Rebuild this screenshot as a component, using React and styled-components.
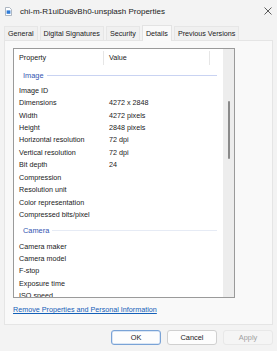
import React from 'react';
import styled, { createGlobalStyle } from 'styled-components';

const GlobalStyle = createGlobalStyle`
    html, body {
        margin: 0;
        padding: 0;
        background: #f3f3f3;
    }
    body {
        font-family: "Liberation Sans", Arial, sans-serif;
        color: #1a1a1a;
    }
`;

const Window = styled.div`
    width: 277px;
    height: 351px;
    display: flex;
    flex-direction: column;
    background: #f3f3f3;
    overflow: hidden;
`;

const TitleBar = styled.div`
    height: 22px;
    display: flex;
    align-items: center;
    padding: 0 5px;
    font-size: 8px;
`;

const TitleText = styled.span`
    margin-left: 8px;
    flex: 1;
    white-space: nowrap;
`;

const TabStrip = styled.div`
    height: 18px;
    display: flex;
    align-items: flex-end;
    gap: 2px;
    padding-left: 4px;
`;

const Tab = styled.div`
    height: ${p => (p.active ? 16 : 14)}px;
    box-sizing: border-box;
    display: flex;
    align-items: center;
    padding: 0 3px;
    font-size: 7.2px;
    white-space: nowrap;
    background: ${p => (p.active ? '#f9f9f9' : '#f0f0f0')};
    border: 1px solid ${p => (p.active ? '#e3e3e3' : '#e6e6e6')};
    border-bottom: none;
    margin-bottom: ${p => (p.active ? -1 : 0)}px;
    position: relative;
    z-index: ${p => (p.active ? 1 : 0)};
`;

const Panel = styled.div`
    margin: 0 4px;
    height: 285px;
    box-sizing: border-box;
    background: #f9f9f9;
    border: 1px solid #e5e5e5;
    padding: 7px 0 0 8px;
    display: flex;
    flex-direction: column;
`;

const ListBox = styled.div`
    width: 222px;
    height: 250px;
    flex-shrink: 0;
    box-sizing: border-box;
    border: 1px solid #9a9a9a;
    background: #fff;
    display: flex;
    overflow: hidden;
`;

const ListBody = styled.div`
    flex: 1;
    display: flex;
    flex-direction: column;
`;

const HeaderRow = styled.div`
    height: 17px;
    flex-shrink: 0;
    display: flex;
    align-items: center;
    font-size: 7.2px;
`;

const HeaderCell = styled.div`
    width: ${p => p.w}px;
    height: 14px;
    box-sizing: border-box;
    display: flex;
    align-items: center;
    padding-left: 5px;
    border-right: 1px solid ${p => (p.last ? 'transparent' : '#e6e6e6')};
`;

const GroupHeader = styled.div`
    height: ${p => p.h}px;
    flex-shrink: 0;
    display: flex;
    align-items: center;
    padding-left: 9px;
    padding-right: 6px;
    font-size: 7.4px;
    color: #3354b0;
    gap: 3px;

    &::after {
        content: '';
        flex: 1;
        height: 1px;
        background: ${p => p.line};
    }
`;

const Row = styled.div`
    height: 12.45px;
    flex-shrink: 0;
    display: flex;
    align-items: center;
    font-size: 7.2px;
    white-space: nowrap;
`;

const Cell = styled.div`
    width: ${p => p.w}px;
    padding-left: 5px;
    box-sizing: border-box;
`;

const Scrollbar = styled.div`
    width: 12px;
    background: #ededed;
    position: relative;
`;

const Thumb = styled.div`
    position: absolute;
    left: 5px;
    top: 52px;
    width: 1.5px;
    height: 58px;
    background: #8a8a8a;
    border-radius: 1px;
`;

const Link = styled.a`
    margin-top: 7px;
    font-size: 7.2px;
    color: #1460b8;
    text-decoration: underline;
`;

const ButtonBar = styled.div`
    flex: 1;
    display: flex;
    justify-content: flex-end;
    align-items: flex-start;
    gap: 6px;
    padding: 5px 4px 0 0;
`;

const Button = styled.div`
    width: 50px;
    height: 15px;
    box-sizing: border-box;
    border-radius: 3px;
    display: flex;
    align-items: center;
    justify-content: center;
    font-size: 7.4px;
    background: ${p => (p.disabled ? '#f5f5f5' : '#fdfdfd')};
    color: ${p => (p.disabled ? '#a0a0a0' : '#1a1a1a')};
    border: 1px solid ${p => (p.primary ? '#7aa3d6' : p.disabled ? '#e8e8e8' : '#d0d0d0')};
    box-shadow: ${p => (p.primary ? 'inset 0 0 0 0.5px #b8cfee' : 'none')};
`;

const FileIcon = () => (
    <svg width="7" height="9" viewBox="0 0 7 9">
        <path d="M0.5 0.5 H4.5 L6.5 2.5 V8.5 H0.5 Z" fill="#fff" stroke="#9aa6b4" strokeWidth="0.8" />
        <rect x="1.6" y="3.4" width="3.8" height="3.4" fill="#2f7bd6" />
    </svg>
);

const CloseIcon = () => (
    <svg width="8" height="8" viewBox="0 0 8 8">
        <path d="M0.5 0.5 L7.5 7.5 M7.5 0.5 L0.5 7.5" stroke="#333" strokeWidth="0.8" />
    </svg>
);

const tabs = ['General', 'Digital Signatures', 'Security', 'Details', 'Previous Versions'];

const imageRows = [
    ['Image ID', ''],
    ['Dimensions', '4272 x 2848'],
    ['Width', '4272 pixels'],
    ['Height', '2848 pixels'],
    ['Horizontal resolution', '72 dpi'],
    ['Vertical resolution', '72 dpi'],
    ['Bit depth', '24'],
    ['Compression', ''],
    ['Resolution unit', ''],
    ['Color representation', ''],
    ['Compressed bits/pixel', ''],
];

const cameraRows = ['Camera maker', 'Camera model', 'F-stop', 'Exposure time', 'ISO speed'];

export default function App() {
    return (
        <Window>
            <GlobalStyle />
            <TitleBar>
                <FileIcon />
                <TitleText>chi-m-R1uiDu8vBh0-unsplash Properties</TitleText>
                <CloseIcon />
            </TitleBar>
            <TabStrip>
                {tabs.map(t => (
                    <Tab key={t} active={t === 'Details'}>{t}</Tab>
                ))}
            </TabStrip>
            <Panel>
                <ListBox>
                    <ListBody>
                        <HeaderRow>
                            <HeaderCell w={90}>Property</HeaderCell>
                            <HeaderCell w={106}>Value</HeaderCell>
                            <HeaderCell w={13} last />
                        </HeaderRow>
                        <GroupHeader h={18} line="#c9d3f2">Image</GroupHeader>
                        {imageRows.map(([k, v]) => (
                            <Row key={k}>
                                <Cell w={90}>{k}</Cell>
                                <Cell w={106}>{v}</Cell>
                            </Row>
                        ))}
                        <GroupHeader h={19} line="#e6ebf5">Camera</GroupHeader>
                        {cameraRows.map(k => (
                            <Row key={k}>
                                <Cell w={90}>{k}</Cell>
                            </Row>
                        ))}
                    </ListBody>
                    <Scrollbar>
                        <Thumb />
                    </Scrollbar>
                </ListBox>
                <Link>Remove Properties and Personal Information</Link>
            </Panel>
            <ButtonBar>
                <Button primary>OK</Button>
                <Button>Cancel</Button>
                <Button disabled>Apply</Button>
            </ButtonBar>
        </Window>
    );
}
